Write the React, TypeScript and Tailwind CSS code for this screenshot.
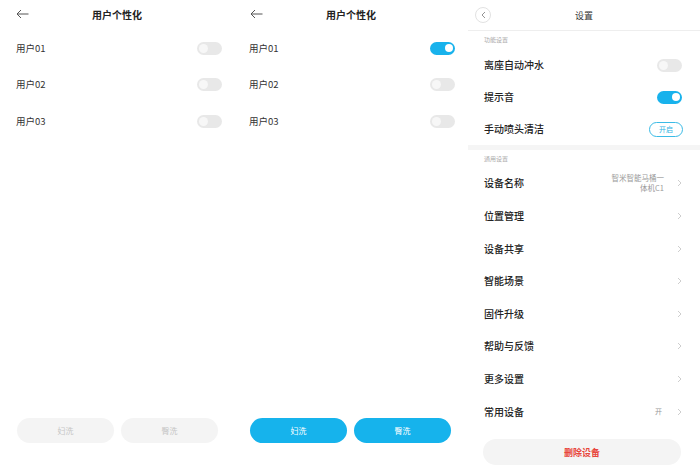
import React from "react";

const BackArrow = () => (
  <svg width="13" height="10" viewBox="0 0 13 10" fill="none" stroke="#555" strokeWidth="1">
    <path d="M12.5 5H1M5 1L1 5l4 4" />
  </svg>
);

const Toggle = ({ on }: { on?: boolean }) =>
  on ? (
    <div className="w-[25px] h-[13px] rounded-full bg-[#18b2ec] flex items-center justify-end pr-[2px]">
      <div className="w-[8px] h-[8px] rounded-full bg-white" />
    </div>
  ) : (
    <div className="w-[25px] h-[13px] rounded-full bg-[#e8e8e8] flex items-center pl-[2px]">
      <div className="w-[9px] h-[9px] rounded-full bg-[#f7f7f7]" />
    </div>
  );

const Chevron = () => (
  <svg width="5" height="8" viewBox="0 0 5 8" fill="none" stroke="#c8c8c8" strokeWidth="0.9">
    <path d="M1 1l3 3-3 3" />
  </svg>
);

const UserPanel = ({ active }: { active?: boolean }) => (
  <div className="w-[234px] h-full flex flex-col bg-white">
    <div className="h-[30px] relative flex items-center justify-center">
      <div className="absolute left-[16px] top-[9px]">
        <BackArrow />
      </div>
      <span className="text-[10px] font-bold text-[#222] leading-none">用户个性化</span>
    </div>
    {["用户01", "用户02", "用户03"].map((u, i) => (
      <div key={u} className={`h-[36.5px] flex items-center justify-between ${active ? "pl-[15px] pr-[13px]" : "pl-[16px] pr-[12px]"}`}>
        <span className="text-[9.5px] text-[#333] leading-none">{u}</span>
        <Toggle on={active && i === 0} />
      </div>
    ))}
    <div className="flex-1" />
    <div className={`flex gap-[7px] pb-[22px] ${active ? "pl-[16px]" : "pl-[17px]"}`}>
      {["妇洗", "臀洗"].map((t) => (
        <div
          key={t}
          className={`w-[97px] h-[25px] rounded-full flex items-center justify-center text-[8px] ${
            active ? "bg-[#16b3ec] text-white" : "bg-[#f4f4f4] text-[#c6c6c6]"
          }`}
        >
          {t}
        </div>
      ))}
    </div>
  </div>
);

const Row = ({ label, right }: { label: string; right?: React.ReactNode }) => (
  <div className="h-[32.7px] flex items-center justify-between pl-[16px] pr-[18px]">
    <span className="text-[10px] font-medium text-[#222] leading-none">{label}</span>
    {right}
  </div>
);

const SettingsPanel = () => (
  <div className="w-[232px] h-full flex flex-col bg-white overflow-hidden">
    <div className="h-[31px] relative flex items-center justify-center border-b border-[#eeeeee] shrink-0">
      <div className="absolute left-[7px] top-[7px] w-[16px] h-[16px] rounded-full border border-[#e2e2e2] flex items-center justify-center">
        <svg width="5" height="8" viewBox="0 0 5 8" fill="none" stroke="#888" strokeWidth="0.9">
          <path d="M4 1L1 4l3 3" />
        </svg>
      </div>
      <span className="text-[9px] text-[#333] leading-none">设置</span>
    </div>
    <div className="h-[18px] flex items-center pl-[16px] shrink-0">
      <span className="text-[6px] text-[#aaa] leading-none">功能设置</span>
    </div>
    <div className="h-[32px] flex items-center justify-between pl-[16px] pr-[18px] shrink-0">
      <span className="text-[10px] font-medium text-[#222] leading-none">离座自动冲水</span>
      <Toggle />
    </div>
    <div className="h-[32px] flex items-center justify-between pl-[16px] pr-[18px] shrink-0">
      <span className="text-[10px] font-medium text-[#222] leading-none">提示音</span>
      <Toggle on />
    </div>
    <div className="h-[32px] flex items-center justify-between pl-[16px] pr-[17px] shrink-0">
      <span className="text-[10px] font-medium text-[#222] leading-none">手动喷头清洁</span>
      <div className="w-[34px] h-[15px] rounded-full border border-[#3bbbe6] flex items-center justify-center text-[7px] text-[#2fb3e3] leading-none">
        开启
      </div>
    </div>
    <div className="h-[5px] bg-[#f5f5f5] shrink-0" />
    <div className="h-[17px] flex items-center pl-[16px] shrink-0">
      <span className="text-[6px] text-[#aaa] leading-none">通用设置</span>
    </div>
    <Row
      label="设备名称"
      right={
        <div className="flex items-center gap-[13px]">
          <div className="text-[7.5px] text-[#999] text-right leading-[10px]">
            智米智能马桶一
            <br />
            体机C1
          </div>
          <Chevron />
        </div>
      }
    />
    <Row label="位置管理" right={<Chevron />} />
    <Row label="设备共享" right={<Chevron />} />
    <Row label="智能场景" right={<Chevron />} />
    <Row label="固件升级" right={<Chevron />} />
    <Row label="帮助与反馈" right={<Chevron />} />
    <Row label="更多设置" right={<Chevron />} />
    <Row
      label="常用设备"
      right={
        <div className="flex items-center gap-[15px]">
          <span className="text-[7px] text-[#999] leading-none">开</span>
          <Chevron />
        </div>
      }
    />
    <div className="pl-[15px] mt-[11px] shrink-0">
      <div className="w-[198px] h-[26px] rounded-full bg-[#f4f4f4] flex items-center justify-center">
        <span className="text-[9px] font-bold text-[#e8463c] leading-none">删除设备</span>
      </div>
    </div>
  </div>
);

export default function App() {
  return (
    <div className="w-[700px] h-[465px] flex bg-white font-['Noto_Sans_CJK_SC','Noto_Sans',sans-serif] overflow-hidden">
      <UserPanel />
      <UserPanel active />
      <SettingsPanel />
    </div>
  );
}
